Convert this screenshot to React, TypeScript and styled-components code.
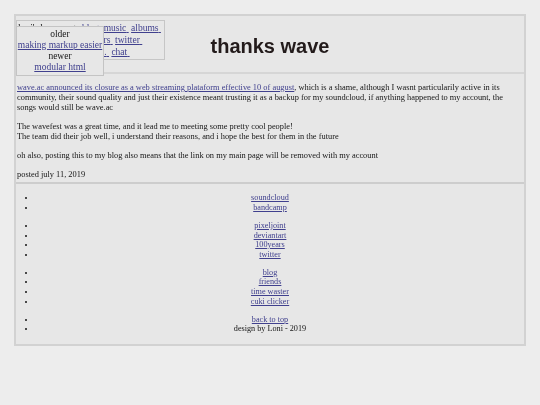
import React from 'react';
import styled, { createGlobalStyle } from 'styled-components';

const GlobalStyle = createGlobalStyle`
  html, body {
    margin: 0;
    padding: 0;
    background: #ededed;
  }
  body {
    font-family: "Liberation Serif", "Times New Roman", serif;
    color: #151515;
    -webkit-font-smoothing: antialiased;
  }
  a {
    color: #40408e;
  }
`;

const Page = styled.div`
  padding: 14px;
  will-change: transform;
`;

const Frame = styled.div`
  border: 2px solid #d2d2d2;
  background: #e7e7e7;
`;

const Header = styled.header`
  display: grid;
  grid-template-columns: 1fr auto 1fr;
  align-items: start;
  height: 58px;
  padding-top: 4px;
  box-sizing: border-box;
  border-bottom: 2px solid #d6d6d6;
`;

const NavBox = styled.nav`
  position: relative;
  justify-self: start;
  width: 149px;
  box-sizing: border-box;
  border: 1px solid #c6c6c6;
  padding: 1px 1px;
  font-size: 9.5px;
  line-height: 12px;
`;

const NavRow = styled.div`
  white-space: nowrap;
`;

const NavLink = styled.a`
  color: #40408e;
`;

const Dropdown = styled.div`
  position: absolute;
  left: -1px;
  top: 5px;
  width: 88px;
  height: 50px;
  box-sizing: border-box;
  border: 1px solid #c4c4c4;
  background: #e7e7e7;
  padding: 2px 0;
  text-align: center;
  font-size: 9.5px;
  line-height: 11px;
  z-index: 2;
`;

const DropItem = styled.div``;

const Title = styled.h1`
  margin: 0;
  align-self: center;
  font-family: "Liberation Sans", Arial, sans-serif;
  font-weight: 700;
  font-size: 20px;
  color: #231b1b;
`;

const Post = styled.main`
  padding: 0 2px 0 1px;
  font-size: 8.4px;
  line-height: 10px;
`;

const Para = styled.p<{ $last?: boolean }>`
  margin: 9px 0 ${(p) => (p.$last ? '2px' : '9px')};
`;

const Footer = styled.footer`
  border-top: 2px solid #cdcdcd;
  padding: 1px 0 2px;
  font-size: 8.2px;
  line-height: 9.6px;
`;

const LinkList = styled.ul`
  margin: 8.4px 0;
  padding: 0 20px;
  list-style: disc outside;
  text-align: center;
`;

const Item = styled.li``;

const navRows: { text?: string; links: string[] }[] = [
  { text: "loni's homepage", links: ['blog', 'music', 'albums'] },
  { links: ['adopt', 'shrine', 'characters', 'twitter'] },
  { links: ['guestbook', 'updates etc.', 'chat'] },
];

const footerGroups: string[][] = [
  ['soundcloud', 'bandcamp'],
  ['pixeljoint', 'deviantart', '100years', 'twitter'],
  ['blog', 'friends', 'time waster', 'cuki clicker'],
];

export default function App() {
  return (
    <>
      <GlobalStyle />
      <Page>
        <Frame>
          <Header>
            <NavBox>
              {navRows.map((row, i) => (
                <NavRow key={i}>
                  {row.text && <>{row.text} </>}
                  {row.links.map((l) => (
                    <React.Fragment key={l}>
                      <NavLink href="#">{l}&nbsp;</NavLink>{' '}
                    </React.Fragment>
                  ))}
                </NavRow>
              ))}
              <Dropdown>
                <DropItem>older</DropItem>
                <DropItem>
                  <NavLink href="#">making markup easier</NavLink>
                </DropItem>
                <DropItem>newer</DropItem>
                <DropItem>
                  <NavLink href="#">modular html</NavLink>
                </DropItem>
              </Dropdown>
            </NavBox>
            <Title>thanks wave</Title>
            <div />
          </Header>

          <Post>
            <Para>
              <a href="#">wave.ac announced its closure as a web streaming plataform effective 10 of august</a>, which is a shame, although I wasnt particularily active in its community, their sound quality and just their existence meant trusting it as a backup for my soundcloud, if anything happened to my account, the songs would still be wave.ac
            </Para>
            <Para>
              The wavefest was a great time, and it lead me to meeting some pretty cool people!
              <br />
              The team did their job well, i understand their reasons, and i hope the best for them in the future
            </Para>
            <Para>
              oh also, posting this to my blog also means that the link on my main page will be removed with my account
            </Para>
            <Para $last>posted july 11, 2019</Para>
          </Post>

          <Footer>
            {footerGroups.map((g, i) => (
              <LinkList key={i}>
                {g.map((l) => (
                  <Item key={l}>
                    <a href="#">{l}</a>
                  </Item>
                ))}
              </LinkList>
            ))}
            <LinkList>
              <Item>
                <a href="#">back to top</a>
              </Item>
              <Item>design by Loni - 2019</Item>
            </LinkList>
          </Footer>
        </Frame>
      </Page>
    </>
  );
}
